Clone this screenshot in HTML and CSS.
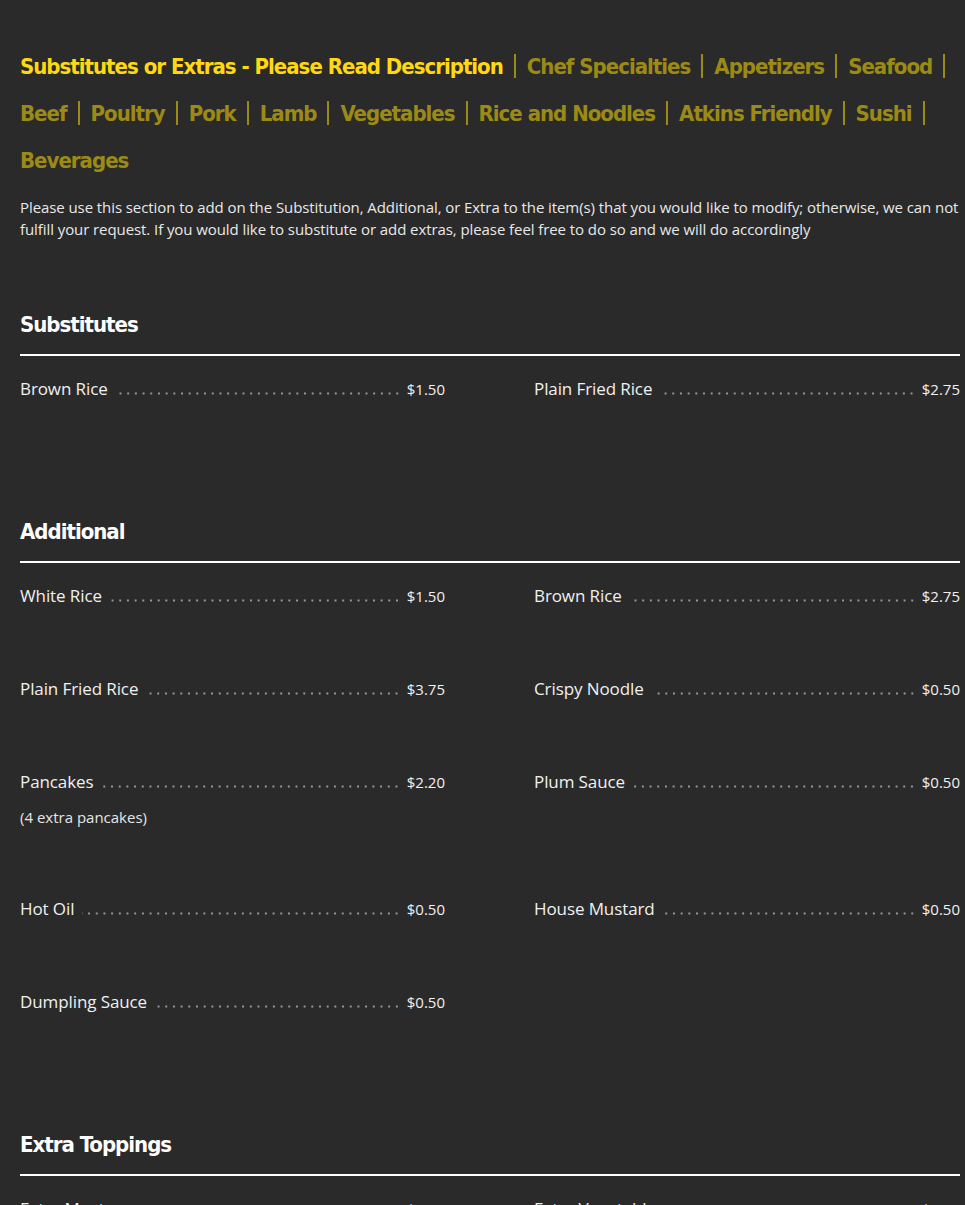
FILE: index.html
```html
<!DOCTYPE html>
<html lang="en">
<head>
<meta charset="utf-8">
<title>Substitutes or Extras</title>
<link rel="stylesheet" href="styles.css">
</head>
<body>
<div class="page">
  <nav class="cats">
    <a class="cat active" href="#">Substitutes or Extras - Please Read Description</a><span class="sep"></span><a class="cat" href="#">Chef Specialties</a><span class="sep"></span><a class="cat" href="#">Appetizers</a><span class="sep"></span><a class="cat" href="#">Seafood</a><span class="sep"></span><a class="cat" href="#">Beef</a><span class="sep"></span><a class="cat" href="#">Poultry</a><span class="sep"></span><a class="cat" href="#">Pork</a><span class="sep"></span><a class="cat" href="#">Lamb</a><span class="sep"></span><a class="cat" href="#">Vegetables</a><span class="sep"></span><a class="cat" href="#">Rice and Noodles</a><span class="sep"></span><a class="cat" href="#">Atkins Friendly</a><span class="sep"></span><a class="cat" href="#">Sushi</a><span class="sep"></span><a class="cat" href="#">Beverages</a>
  </nav>

  <p class="intro">Please use this section to add on the Substitution, Additional, or Extra to the item(s) that you would like to modify; otherwise, we can not fulfill your request. If you would like to substitute or add extras, please feel free to do so and we will do accordingly</p>

  <section class="menu-section">
    <h2 class="section-title">Substitutes</h2>
    <div class="items">
      <div class="item"><div class="item-line"><span class="name">Brown Rice</span><span class="dots"></span><span class="price">$1.50</span></div></div>
      <div class="item"><div class="item-line"><span class="name">Plain Fried Rice</span><span class="dots"></span><span class="price">$2.75</span></div></div>
    </div>
  </section>

  <section class="menu-section">
    <h2 class="section-title">Additional</h2>
    <div class="items">
      <div class="item"><div class="item-line"><span class="name">White Rice</span><span class="dots"></span><span class="price">$1.50</span></div></div>
      <div class="item"><div class="item-line"><span class="name">Brown Rice</span><span class="dots"></span><span class="price">$2.75</span></div></div>
      <div class="item"><div class="item-line"><span class="name">Plain Fried Rice</span><span class="dots"></span><span class="price">$3.75</span></div></div>
      <div class="item"><div class="item-line"><span class="name">Crispy Noodle</span><span class="dots"></span><span class="price">$0.50</span></div></div>
      <div class="item"><div class="item-line"><span class="name">Pancakes</span><span class="dots"></span><span class="price">$2.20</span></div><p class="desc">(4 extra pancakes)</p></div>
      <div class="item"><div class="item-line"><span class="name">Plum Sauce</span><span class="dots"></span><span class="price">$0.50</span></div></div>
      <div class="item"><div class="item-line"><span class="name">Hot Oil</span><span class="dots"></span><span class="price">$0.50</span></div></div>
      <div class="item"><div class="item-line"><span class="name">House Mustard</span><span class="dots"></span><span class="price">$0.50</span></div></div>
      <div class="item"><div class="item-line"><span class="name">Dumpling Sauce</span><span class="dots"></span><span class="price">$0.50</span></div></div>
    </div>
  </section>

  <section class="menu-section">
    <h2 class="section-title">Extra Toppings</h2>
    <div class="items">
      <div class="item"><div class="item-line"><span class="name">Extra Meat</span><span class="dots"></span><span class="price">$3.00</span></div></div>
      <div class="item"><div class="item-line"><span class="name">Extra Vegetable</span><span class="dots"></span><span class="price">$2.00</span></div></div>
    </div>
  </section>
</div>
</body>
</html>
```

FILE: styles.css
```css
html, body {
  margin: 0;
  padding: 0;
  background: #2a2a2a;
}

body {
  font-family: "Open Sans", "Noto Sans", sans-serif;
  color: #ececec;
}

.page {
  width: 940px;
  padding: 43px 0 40px 20px;
}

.cats {
  font-family: "DejaVu Sans Condensed", "Liberation Sans", sans-serif;
  font-weight: 700;
  font-size: 22px;
  letter-spacing: -1px;
  line-height: 47px;
}

.cat {
  color: #9c8a16;
  text-decoration: none;
  white-space: nowrap;
}

.cat.active {
  color: #ffd814;
}

.sep {
  display: inline-block;
  width: 2px;
  height: 24px;
  background: #9c8a16;
  margin: 0 11px;
  vertical-align: -4px;
}

.intro {
  margin: 12px 0 0;
  font-size: 15px;
  line-height: 22px;
  letter-spacing: -0.08px;
  color: #e8e8e8;
}

.menu-section {
  margin-top: 70px;
}

.section-title {
  margin: 0;
  font-family: "DejaVu Sans Condensed", "Liberation Sans", sans-serif;
  font-weight: 700;
  font-size: 22px;
  letter-spacing: -1px;
  line-height: 30px;
  color: #ffffff;
  padding-bottom: 14px;
  border-bottom: 2px solid #ffffff;
}

.items {
  display: grid;
  grid-template-columns: 425px 426px;
  justify-content: space-between;
  row-gap: 69px;
  padding-top: 21px;
  padding-bottom: 46px;
}

.item-line {
  display: flex;
  align-items: baseline;
  line-height: 24px;
}

.name {
  font-size: 17px;
  letter-spacing: -0.1px;
  color: #f0f0f0;
  white-space: nowrap;
}

.dots {
  flex: 1;
  height: 3px;
  margin: 0 6px 0 8px;
  background-image: radial-gradient(circle, #9a9a9a 0.9px, transparent 1.3px);
  background-size: 7.7px 3px;
  background-repeat: repeat-x;
  background-position: right bottom;
}

.price {
  font-size: 15px;
  color: #f0f0f0;
}

.desc {
  margin: 12px 0 0;
  font-size: 15px;
  line-height: 22px;
  color: #e6e6e6;
}
```
